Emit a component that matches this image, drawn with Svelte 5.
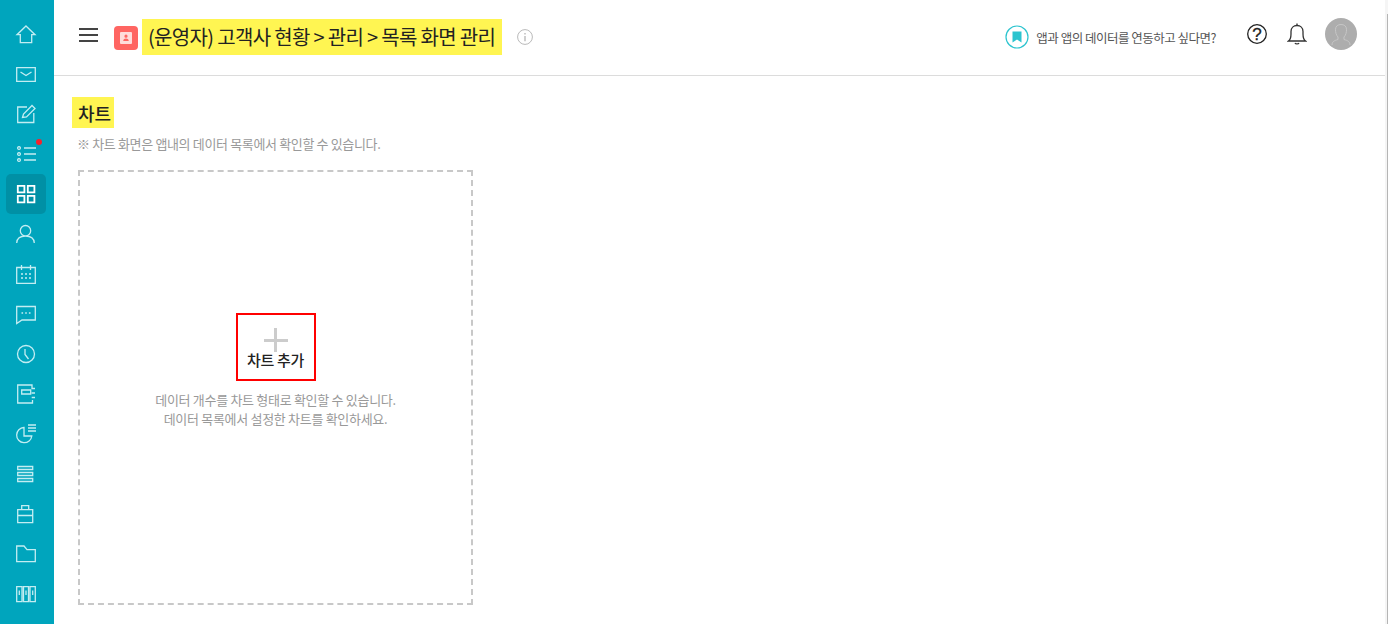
<script lang="ts">
  // sidebar icons, drawn on a 24x24 box
  const navItems = [
    { id: "home", d: "M12 4 L21 12.7 H17.7 V20.7 H6.3 V12.7 H3 Z" },
    { id: "mail", d: "M2.7 5.7 H21.3 V19.3 H2.7 Z M6.5 10 L12 13.5 L17.5 10" },
    { id: "edit", d: "M13 5 H3.7 V20.5 H19.8 V11 M8.5 15.5 L9.5 12 L18 3.5 L21 6.5 L12.5 15 Z" },
    { id: "todo", d: "M10 6 H22 M10 12 H22 M10 18 H22 M5 4.6 a1.4 1.4 0 1 0 .01 0 Z M5 10.6 a1.4 1.4 0 1 0 .01 0 Z M5 16.6 a1.4 1.4 0 1 0 .01 0 Z", dot: true },
    { id: "grid", d: "M3.8 3.8 H10.4 V10.4 H3.8 Z M13.8 3.8 H20.4 V10.4 H13.8 Z M3.8 13.8 H10.4 V20.4 H3.8 Z M13.8 13.8 H20.4 V20.4 H13.8 Z", active: true },
    { id: "user", d: "M2.7 21 C3 16 7 14 11.5 14 C16 14 20 16 20.3 21 M11.5 3.5 A5.2 5.2 0 1 0 11.5 13.9 A5.2 5.2 0 1 0 11.5 3.5 Z" },
    { id: "calendar", d: "M2.7 5.5 H21.3 V21.3 H2.7 Z M7.5 3 V8 M16.5 3 V8 M7 12 h2 M11 12 h2 M15 12 h2 M7 16 h2 M11 16 h2 M15 16 h2" },
    { id: "chat", d: "M2.7 4.5 H21.3 V18 H8 L2.7 21.5 Z M7.5 11 h1.6 M11.2 11 h1.6 M14.9 11 h1.6" },
    { id: "clock", d: "M12 3.5 A8.5 8.5 0 1 0 12 20.5 A8.5 8.5 0 1 0 12 3.5 Z M11 7 V12.5 L14.5 17" },
    { id: "note", d: "M18 7 V3 H3.7 V21 H18.5 V18 M7.7 8 H16.7 V12 H7.7 Z M17.7 6.5 h3.3 M17.7 11 h3.3 M17.7 15.5 h3.3" },
    { id: "pie", d: "M10 5.5 A7.6 7.6 0 1 0 17.8 14 H10 Z M14 3 H22 M14 6 H22 M14 9 H22" },
    { id: "rows", d: "M3.7 4.5 H18.7 V7.5 H3.7 Z M3.7 10.5 H18.7 V13.5 H3.7 Z M3.7 16.5 H18.7 V19.5 H3.7 Z" },
    { id: "case", d: "M3.7 7.7 H18.7 V20.7 H3.7 Z M7.7 7.7 V3.7 H14.7 V7.7 M3.7 13.5 H18.7" },
    { id: "folder", d: "M2.7 4 H10 L13 7.7 H21.3 V19.7 H2.7 Z" },
    { id: "books", d: "M2.7 4.7 H8 V19.7 H2.7 Z M9.5 4.7 H14.5 V19.7 H9.5 Z M16 4.7 H21.3 V19.7 H16 Z M5.3 8.5 V13 M12 8.5 V13 M18.7 8.5 V13" }
  ];
</script>

<div class="layout">
  <nav class="sidebar">
    {#each navItems as item (item.id)}
      <a class="nav-item" class:active={item.active} href="#{item.id}" aria-label={item.id}>
        <svg viewBox="0 0 24 24" width="24" height="24" fill="none" stroke="currentColor" stroke-width="1.3">
          <path d={item.d} />
        </svg>
        {#if item.dot}<span class="dot"></span>{/if}
      </a>
    {/each}
  </nav>

  <div class="main">
    <header class="topbar">
      <button class="menu" aria-label="menu">
        <span></span><span></span><span></span>
      </button>
      <span class="page-icon">
        <svg viewBox="0 0 24 24" width="24" height="24">
          <rect width="24" height="24" rx="4" fill="#ff6562" />
          <rect x="6" y="6" width="12" height="12" rx="1" fill="#ffdcdb" />
          <path d="M12 8.6 a1.6 1.6 0 1 1 0 3.2 a1.6 1.6 0 1 1 0 -3.2 Z M9.2 15 c0.3 -2 1.4 -2.6 2.8 -2.6 s2.5 0.6 2.8 2.6 Z" fill="#ff6562" />
        </svg>
      </span>
      <h1 class="page-title">(운영자) 고객사 현황 &gt; 관리 &gt; 목록 화면 관리</h1>
      <svg class="info" viewBox="0 0 16 16" width="16" height="16" fill="none" stroke="#b9b9b9">
        <circle cx="8" cy="8" r="7.4" />
        <path d="M8 7 V12.2" stroke-width="1.4" />
        <path d="M8 4 V5.6" stroke-width="1.4" />
      </svg>

      <div class="top-right">
        <a class="link-hint" href="#link">
          <svg viewBox="0 0 24 24" width="24" height="24">
            <circle cx="12" cy="12" r="11" fill="none" stroke="#2cc4cf" stroke-width="1.2" />
            <path d="M7.5 6.5 H16.5 V17.5 L12 14.6 L7.5 17.5 Z" fill="#2cc4cf" />
          </svg>
          <span>앱과 앱의 데이터를 연동하고 싶다면?</span>
        </a>
        <svg class="help" viewBox="0 0 20 20" width="20" height="20" fill="none" stroke="#222">
          <circle cx="10" cy="10" r="9.3" stroke-width="1.3" />
          <text x="10" y="15.8" text-anchor="middle" class="help-mark">?</text>
        </svg>
        <svg class="bell" viewBox="0 0 20 22" width="20" height="22" fill="none" stroke="#333" stroke-width="1.3">
          <path d="M1.5 18 H18.5 C16.5 16.5 16 15 16 11 V8.5 C16 5 13.5 2.5 10 2.5 C6.5 2.5 4 5 4 8.5 V11 C4 15 3.5 16.5 1.5 18 Z" />
          <path d="M10 0.5 V2.5 M8 20 C8.5 21.2 11.5 21.2 12 20" />
        </svg>
        <span class="avatar">
          <svg viewBox="0 0 32 32" width="32" height="32" fill="none" stroke="#c6c6c6" stroke-width="1">
            <path d="M7 27 C7 23.5 9.5 22.5 13 21.5 V19 C11 17 10.5 14 10.5 11.5 C10.5 8 13 6.5 16 6.5 C19 6.5 21.5 8 21.5 11.5 C21.5 14 21 17 19 19 V21.5 C22.5 22.5 25 23.5 25 27" />
          </svg>
        </span>
      </div>
    </header>

    <section class="content">
      <h2 class="section-title">차트</h2>
      <p class="section-note">※ 차트 화면은 앱내의 데이터 목록에서 확인할 수 있습니다.</p>

      <div class="chart-box">
        <button class="add-chart">
          <span class="plus"></span>
          <span class="add-label">차트 추가</span>
        </button>
        <p class="chart-desc">데이터 개수를 차트 형태로 확인할 수 있습니다.<br />데이터 목록에서 설정한 차트를 확인하세요.</p>
      </div>
    </section>
  </div>

  <div class="scrollbar"><span></span></div>
</div>

<style>
  :global(body) {
    margin: 0;
    background: #fff;
    overflow: hidden;
    font-family: "Noto Sans CJK KR", "Noto Sans", sans-serif;
  }

  .layout {
    position: relative;
    display: flex;
    height: 624px;
  }

  .sidebar {
    flex: 0 0 54px;
    display: flex;
    flex-direction: column;
    align-items: flex-start;
    padding: 14px 0 0 6px;
    background: #00a5bd;
    box-sizing: border-box;
  }

  .nav-item {
    position: relative;
    display: flex;
    align-items: center;
    justify-content: center;
    width: 40px;
    height: 40px;
    flex: none;
    border-radius: 5px;
    color: #c3edf2;
  }

  .nav-item.active {
    background: #0090a5;
    color: #fff;
  }

  .nav-item.active svg {
    stroke-width: 1.8;
  }

  .dot {
    position: absolute;
    top: 5px;
    right: 4px;
    width: 6px;
    height: 6px;
    border-radius: 50%;
    background: #f5222d;
  }

  .main {
    flex: 1;
    min-width: 0;
  }

  .topbar {
    display: flex;
    align-items: center;
    height: 74px;
    padding: 0 31px 1px 25px;
    border-bottom: 1px solid #dcdcdc;
  }

  .menu {
    display: flex;
    flex-direction: column;
    gap: 4px;
    width: 19px;
    padding: 0;
    margin: -4px 16px 0 0;
    border: 0;
    background: none;
  }

  .menu span {
    display: block;
    height: 2px;
    background: #444;
  }

  .page-icon {
    display: flex;
    margin: 2px 4px 0 0;
  }

  .page-title {
    margin: 0;
    padding: 0 7px 0 6px;
    height: 36px;
    line-height: 36px;
    font-size: 20px;
    font-weight: 400;
    letter-spacing: -0.67px;
    color: #222;
    background: #fff552;
    white-space: nowrap;
  }

  .info {
    margin-left: 15px;
  }

  .top-right {
    display: flex;
    align-items: center;
    margin-left: auto;
  }

  .link-hint {
    display: flex;
    align-items: center;
    gap: 7px;
    font-size: 12.5px;
    letter-spacing: -0.5px;
    color: #555;
    text-decoration: none;
  }

  .help {
    margin: -6px 0 0 31px;
  }

  .help-mark {
    font: 400 17px "Liberation Sans", sans-serif;
    fill: #222;
    stroke: #222;
    stroke-width: 0.3;
  }

  .bell {
    margin: -6px 0 0 20px;
  }

  .avatar {
    display: flex;
    width: 32px;
    height: 32px;
    margin: -6px 0 0 18px;
    border-radius: 50%;
    background: #adadad;
    overflow: hidden;
  }

  .content {
    padding: 21px 0 0 18px;
  }

  .section-title {
    display: inline-block;
    margin: 0;
    padding: 0 3px 0 6px;
    height: 31px;
    line-height: 33px;
    font-size: 18px;
    font-weight: 500;
    color: #222;
    background: #fff552;
    vertical-align: top;
  }

  .section-note {
    margin: 7px 0 0 5px;
    font-size: 13px;
    line-height: 18px;
    letter-spacing: -0.35px;
    color: #999;
  }

  .chart-box {
    display: flex;
    flex-direction: column;
    align-items: center;
    box-sizing: border-box;
    width: 395px;
    height: 435px;
    margin: 17px 0 0 6px;
    padding-top: 141px;
    border: 2px dashed #c8c8c8;
  }

  .add-chart {
    display: flex;
    flex-direction: column;
    align-items: center;
    box-sizing: border-box;
    width: 80px;
    height: 68px;
    padding: 13px 0 0;
    border: 2px solid #f00;
    background: #fff;
    font: inherit;
  }

  .plus {
    width: 24px;
    height: 24px;
    background:
      linear-gradient(#ccc, #ccc) center / 100% 3px no-repeat,
      linear-gradient(#ccc, #ccc) center / 3px 100% no-repeat;
  }

  .add-label {
    margin-top: -2px;
    font-size: 15px;
    line-height: 20px;
    font-weight: 500;
    letter-spacing: -0.3px;
    color: #222;
  }

  .chart-desc {
    margin: 9px 0 0;
    font-size: 13px;
    line-height: 19px;
    letter-spacing: -0.3px;
    text-align: center;
    color: #999;
  }

  .scrollbar {
    position: absolute;
    top: 0;
    right: 0;
    bottom: 0;
    width: 3px;
    background: #f5f5f5;
  }

  .scrollbar span {
    position: absolute;
    top: 14px;
    right: 0;
    bottom: 0;
    width: 1px;
    background: #b5b5b5;
  }
</style>
